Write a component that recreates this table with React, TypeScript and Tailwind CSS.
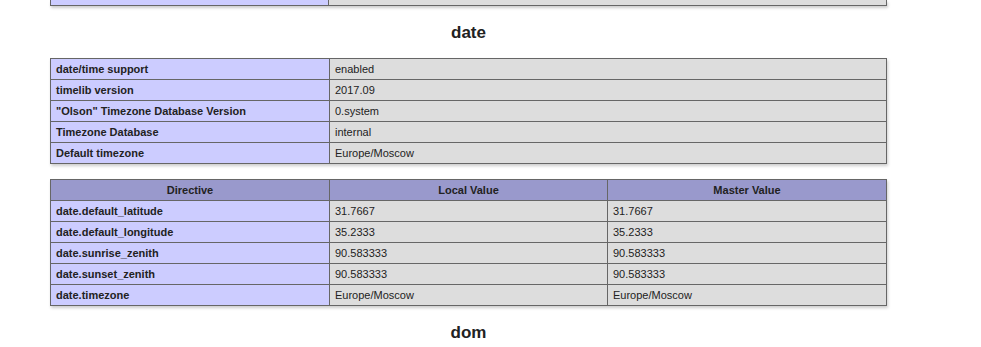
import React from "react";

const GENERAL: [string, string][] = [
  ["date/time support", "enabled"],
  ["timelib version", "2017.09"],
  ['"Olson" Timezone Database Version', "0.system"],
  ["Timezone Database", "internal"],
  ["Default timezone", "Europe/Moscow"],
];

const DIRECTIVES: [string, string, string][] = [
  ["date.default_latitude", "31.7667", "31.7667"],
  ["date.default_longitude", "35.2333", "35.2333"],
  ["date.sunrise_zenith", "90.583333", "90.583333"],
  ["date.sunset_zenith", "90.583333", "90.583333"],
  ["date.timezone", "Europe/Moscow", "Europe/Moscow"],
];

const cell = "border border-[#666] px-[5px] py-[4px] leading-[12px] align-baseline text-[11px]";
const eCell = `${cell} bg-[#ccf] font-bold`;
const vCell = `${cell} bg-[#ddd] break-words`;
const hCell = `${cell} bg-[#99c] font-bold text-center`;

function Heading({ children }: { children: React.ReactNode }) {
  return (
    <div className="h-[52px] flex items-center justify-center">
      <h2 className="text-[17px] font-bold leading-none text-[#222]">{children}</h2>
    </div>
  );
}

export default function App() {
  return (
    <div
      className="min-h-[347px] bg-white text-[#222] overflow-hidden"
      style={{ fontFamily: '"Liberation Sans", Arial, sans-serif' }}
    >
      <div className="ml-[50px] w-[837px]">
        {/* tail of the previous module's table */}
        <div className="flex h-[6px] shadow-[1px_2px_3px_#ccc]">
          <div className="w-[279px] bg-[#ccf] border-l border-r border-b border-[#666]" />
          <div className="flex-1 bg-[#ddd] border-r border-b border-[#666]" />
        </div>

        <Heading>date</Heading>

        <table className="w-[837px] table-fixed border-collapse shadow-[1px_2px_3px_#ccc]">
          <colgroup>
            <col className="w-[279px]" />
            <col />
          </colgroup>
          <tbody>
            {GENERAL.map(([k, v]) => (
              <tr key={k}>
                <td className={eCell}>{k}</td>
                <td className={vCell}>{v}</td>
              </tr>
            ))}
          </tbody>
        </table>

        <table className="mt-[15px] w-[837px] table-fixed border-collapse shadow-[1px_2px_3px_#ccc]">
          <colgroup>
            <col className="w-[279px]" />
            <col className="w-[278px]" />
            <col />
          </colgroup>
          <thead>
            <tr>
              <th className={hCell}>Directive</th>
              <th className={hCell}>Local Value</th>
              <th className={hCell}>Master Value</th>
            </tr>
          </thead>
          <tbody>
            {DIRECTIVES.map(([k, local, master]) => (
              <tr key={k}>
                <td className={eCell}>{k}</td>
                <td className={vCell}>{local}</td>
                <td className={vCell}>{master}</td>
              </tr>
            ))}
          </tbody>
        </table>

        <Heading>dom</Heading>
      </div>
    </div>
  );
}
